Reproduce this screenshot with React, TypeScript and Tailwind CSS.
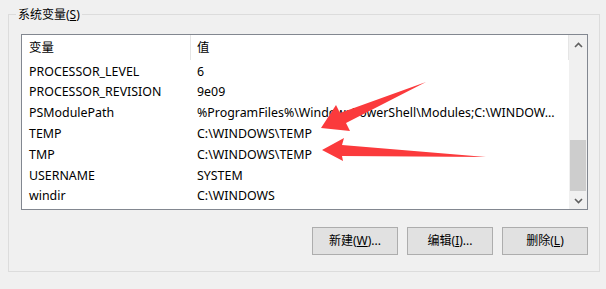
import React from "react";

const rows: [string, string][] = [
  ["PROCESSOR_LEVEL", "6"],
  ["PROCESSOR_REVISION", "9e09"],
  ["PSModulePath", "%ProgramFiles%\\WindowsPowerShell\\Modules;C:\\WINDOW..."],
  ["TEMP", "C:\\WINDOWS\\TEMP"],
  ["TMP", "C:\\WINDOWS\\TEMP"],
  ["USERNAME", "SYSTEM"],
  ["windir", "C:\\WINDOWS"],
];

function Btn({ a, k, b }: { a: string; k: string; b: string }) {
  return (
    <button className="w-[86px] h-[28px] bg-[#e1e1e1] border border-[#adadad] text-[12px] text-black flex items-center justify-center">
      {a}
      <span className="underline">{k}</span>
      {b}
    </button>
  );
}

export default function App() {
  return (
    <div
      className="relative w-[606px] h-[289px] bg-[#f0f0f0] overflow-hidden pt-[14px] pl-[8px]"
      style={{ fontFamily: '"Noto Sans", "Noto Sans CJK SC", sans-serif' }}
    >
      <div className="relative w-[592px] h-[258px] border border-[#dcdcdc] pl-[12px] pt-[19px]">
        <div className="absolute -top-[8px] left-[7px] px-[2px] bg-[#f0f0f0] text-[12px] leading-[16px] text-black">
          系统变量(<span className="underline">S</span>)
        </div>
        <div className="w-[567px] h-[176px] border border-[#828790] bg-white flex">
          <div className="flex-1 flex flex-col text-[12.4px] text-black overflow-hidden">
            <div className="h-[25px] flex items-stretch">
              <div className="w-[168px] pl-[7px] pt-[2px] flex items-center">变量</div>
              <div className="flex-1 border-l border-r border-[#e5e5e5] pl-[6px] pt-[2px] flex items-center">值</div>
            </div>
            {rows.map(([n, v]) => (
              <div key={n} className="h-[20.8px] flex items-center whitespace-nowrap pt-[3px]">
                <div className="w-[168px] pl-[7px]">{n}</div>
                <div className="flex-1 pl-[7px]">{v}</div>
              </div>
            ))}
          </div>
          <div className="w-[18px] bg-[#f0f0f0] flex flex-col">
            <div className="h-[20px] flex items-center justify-center">
              <svg width="9" height="6" viewBox="0 0 9 6">
                <path d="M1 5 L4.5 1.5 L8 5" stroke="#606060" strokeWidth="1.6" fill="none" />
              </svg>
            </div>
            <div className="flex-1 px-[1px]">
              <div className="mt-[85px] h-[51px] bg-[#cdcdcd]" />
            </div>
            <div className="h-[17px] flex items-center justify-center">
              <svg width="9" height="6" viewBox="0 0 9 6">
                <path d="M1 1 L4.5 4.5 L8 1" stroke="#606060" strokeWidth="1.6" fill="none" />
              </svg>
            </div>
          </div>
        </div>
        <div className="flex justify-end gap-[9px] w-[567px] mt-[17px]">
          <Btn a="新建(" k="W" b=")..." />
          <Btn a="编辑(" k="I" b=")..." />
          <Btn a="删除(" k="L" b=")" />
        </div>
      </div>
      <svg className="absolute left-0 top-0 pointer-events-none" width="606" height="289">
        <polygon
          points="321,128 336,105 340,113 426,82 346,123 350,131"
          fill="#fb3a3c"
        />
        <polygon
          points="322,150 344,138 342,145 486,157 342,156 343,161"
          fill="#fb3a3c"
        />
      </svg>
    </div>
  );
}
